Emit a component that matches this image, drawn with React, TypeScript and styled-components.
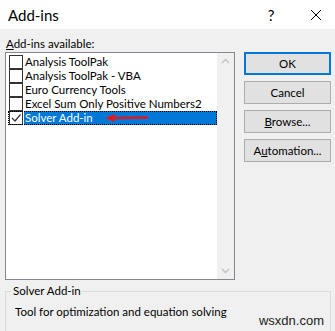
import React from "react";
import styled, { createGlobalStyle } from "styled-components";

const GlobalStyle = createGlobalStyle`
  html, body {
    margin: 0;
    padding: 0;
    background: #f0f0f0;
    overflow: hidden;
  }
  body {
    font-family: Lato, "Noto Sans", sans-serif;
    font-size: 11.5px;
    color: #000;
  }
`;

const Dialog = styled.div`
  width: 335px;
  height: 331px;
  position: relative;
  overflow: hidden;
  background: #f0f0f0;
`;

const TitleBar = styled.div`
  height: 29px;
  background: #fff;
  display: flex;
  align-items: center;
  padding-left: 8px;
`;

const Title = styled.div`
  flex: 1;
  font-size: 15px;
  color: #000;
`;

const TitleButton = styled.div<{ $w: number }>`
  width: ${(p) => p.$w}px;
  height: 29px;
  display: flex;
  align-items: center;
  justify-content: center;
  font-size: 15px;
  color: #000;
`;

const Body = styled.div`
  display: flex;
  padding: 6px 4px 0 5px;
  gap: 9px;
`;

const LeftCol = styled.div`
  display: flex;
  flex-direction: column;
`;

const Label = styled.div`
  height: 17px;
  line-height: 17px;
  padding-left: 1px;
  u {
    text-decoration: underline;
  }
`;

const ListBox = styled.div`
  width: 228px;
  height: 226px;
  border: 1px solid #828790;
  background: #fff;
  display: flex;
`;

const Items = styled.div`
  flex: 1;
  padding: 2px 0 0 2px;
  display: flex;
  flex-direction: column;
`;

const Row = styled.div<{ $selected?: boolean }>`
  position: relative;
  height: 14px;
  display: flex;
  align-items: center;
  outline: ${(p) => (p.$selected ? "1px dotted #000" : "none")};
  outline-offset: -1px;
`;

const Box = styled.div`
  width: 12px;
  height: 12px;
  border: 1px solid #333;
  background: #fff;
  margin-left: 1px;
  flex-shrink: 0;
  display: flex;
  align-items: center;
  justify-content: center;
`;

const ItemText = styled.div<{ $selected?: boolean }>`
  flex: 1;
  height: 14px;
  line-height: 14px;
  margin-left: 1px;
  padding-left: 1px;
  white-space: nowrap;
  overflow: hidden;
  background: ${(p) => (p.$selected ? "#0078d7" : "transparent")};
  color: ${(p) => (p.$selected ? "#fff" : "#000")};
`;

const Scroll = styled.div`
  width: 17px;
  background: #f0f0f0;
  display: flex;
  flex-direction: column;
  justify-content: space-between;
  align-items: center;
  padding: 5px 0;
`;

const Arrow = styled.svg`
  position: absolute;
  left: 97px;
  top: 2px;
`;

const Buttons = styled.div`
  display: flex;
  flex-direction: column;
  gap: 6px;
  padding-top: 17px;
`;

const Button = styled.div<{ $default?: boolean }>`
  width: ${(p) => (p.$default ? "83px" : "85px")};
  height: ${(p) => (p.$default ? "19px" : "21px")};
  line-height: ${(p) => (p.$default ? "19px" : "21px")};
  text-align: center;
  background: #e1e1e1;
  border: ${(p) => (p.$default ? "2px solid #0078d7" : "1px solid #adadad")};
  u {
    text-decoration: underline;
  }
`;

const Group = styled.fieldset`
  margin: 4px 4px 0 5px;
  padding: 0 8px;
  height: 80px;
  border: 1px solid #dcdcdc;
  legend {
    padding: 0 1px;
    margin-left: -2px;
    line-height: 14px;
  }
`;

const Desc = styled.div`
  padding: 7px 0 0 1px;
  line-height: 14px;
`;

const Watermark = styled.div`
  position: absolute;
  right: 11px;
  bottom: 3px;
  font-family: "Liberation Sans", Arial, sans-serif;
  font-size: 13px;
  color: #222;
`;

const Chevron = ({ up }: { up?: boolean }) => (
  <svg width="9" height="6" viewBox="0 0 9 6">
    <path
      d={up ? "M1 5 L4.5 1.5 L8 5" : "M1 1 L4.5 4.5 L8 1"}
      fill="none"
      stroke="#c1c1c1"
      strokeWidth="1.4"
    />
  </svg>
);

const Check = () => (
  <svg width="10" height="10" viewBox="0 0 10 10">
    <path d="M1 5 L4 8 L9.5 1.5" fill="none" stroke="#333" strokeWidth="1.2" />
  </svg>
);

const items = [
  { name: "Analysis ToolPak", checked: false },
  { name: "Analysis ToolPak - VBA", checked: false },
  { name: "Euro Currency Tools", checked: false },
  { name: "Excel Sum Only Positive Numbers2", checked: false },
  { name: "Solver Add-in", checked: true },
];

export default function App() {
  return (
    <Dialog>
      <GlobalStyle />
      <TitleBar>
        <Title>Add-ins</Title>
        <TitleButton $w={52}>?</TitleButton>
        <TitleButton $w={38}>
          <svg width="12" height="12" viewBox="0 0 12 12">
            <path d="M1 1 L11 11 M11 1 L1 11" stroke="#000" strokeWidth="1" />
          </svg>
        </TitleButton>
      </TitleBar>
      <Body>
        <LeftCol>
          <Label>
            <u>A</u>dd-ins available:
          </Label>
          <ListBox>
            <Items>
              {items.map((it) => (
                <Row key={it.name} $selected={it.checked}>
                  <Box>{it.checked && <Check />}</Box>
                  <ItemText $selected={it.checked}>{it.name}</ItemText>
                  {it.checked && (
                    <Arrow width="44" height="10" viewBox="0 0 44 10">
                      <path d="M8 5 L43 4.5" stroke="#e0191e" strokeWidth="2.4" />
                      <path d="M0 5 L10 1 L9 9 Z" fill="#e0191e" />
                    </Arrow>
                  )}
                </Row>
              ))}
            </Items>
            <Scroll>
              <Chevron up />
              <Chevron />
            </Scroll>
          </ListBox>
        </LeftCol>
        <Buttons>
          <Button $default>OK</Button>
          <Button>Cancel</Button>
          <Button>
            <u>B</u>rowse...
          </Button>
          <Button>
            A<u>u</u>tomation...
          </Button>
        </Buttons>
      </Body>
      <Group>
        <legend>Solver Add-in</legend>
        <Desc>Tool for optimization and equation solving</Desc>
      </Group>
      <Watermark>wsxdn.com</Watermark>
    </Dialog>
  );
}
